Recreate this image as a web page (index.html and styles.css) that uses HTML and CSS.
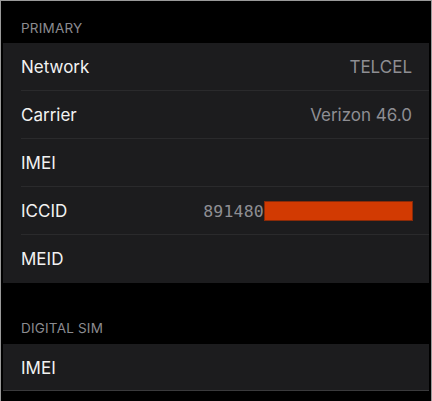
FILE: index.html
```html
<!DOCTYPE html>
<html>
<head>
<meta charset="utf-8">
<link rel="stylesheet" href="styles.css">
</head>
<body>
<div class="frame">
  <div class="section-header first">PRIMARY</div>
  <div class="card">
    <div class="row"><span class="label">Network</span><span class="value">TELCEL</span></div>
    <div class="row"><span class="label">Carrier</span><span class="value">Verizon 46.0</span></div>
    <div class="row"><span class="label">IMEI</span></div>
    <div class="row"><span class="label">ICCID</span><span class="value mono">891480<span class="redact"></span></span></div>
    <div class="row last"><span class="label">MEID</span></div>
  </div>
  <div class="section-header second">DIGITAL SIM</div>
  <div class="card">
    <div class="row full"><span class="label">IMEI</span></div>
  </div>
</div>
</body>
</html>
```

FILE: styles.css
```css
html, body {
  margin: 0;
  padding: 0;
  background: #000;
}
.frame {
  box-sizing: border-box;
  width: 432px;
  height: 401px;
  overflow: hidden;
  border-top: 1px solid #9a9a9a;
  border-left: 1px solid #9a9a9a;
  border-right: 1px solid #9a9a9a;
  padding: 0 2px;
  background: #000;
  font-family: Inter, "Liberation Sans", sans-serif;
}
.section-header {
  display: flex;
  align-items: flex-end;
  box-sizing: border-box;
  padding-left: 18px;
  font-size: 13.5px;
  color: #8b8b90;
  letter-spacing: 0.2px;
}
.section-header.first {
  height: 42px;
  padding-bottom: 7px;
}
.section-header.second {
  height: 61px;
  padding-bottom: 8px;
}
.card {
  background: #1c1c1e;
}
.row {
  height: 48px;
  display: flex;
  align-items: center;
  justify-content: space-between;
  margin-left: 18px;
  padding-right: 17px;
  box-shadow: inset 0 -1px 0 #2a2a2c;
}
.row.last {
  box-shadow: none;
}
.row.full {
  margin-left: 0;
  padding-left: 18px;
  height: 47px;
  box-shadow: inset 0 -1px 0 #3a3a3c;
}
.label {
  font-size: 17px;
  color: #f2f2f2;
}
.value {
  font-size: 17px;
  color: #8e8e93;
  display: flex;
  align-items: center;
}
.mono {
  font-family: "DejaVu Sans Mono", "Liberation Mono", monospace;
  font-size: 16.5px;
  letter-spacing: 0.2px;
}
.redact {
  display: inline-block;
  width: 147px;
  height: 18px;
  margin-right: -1px;
  background: #d23a02;
  border: 1px solid #8a2a08;
}
```
